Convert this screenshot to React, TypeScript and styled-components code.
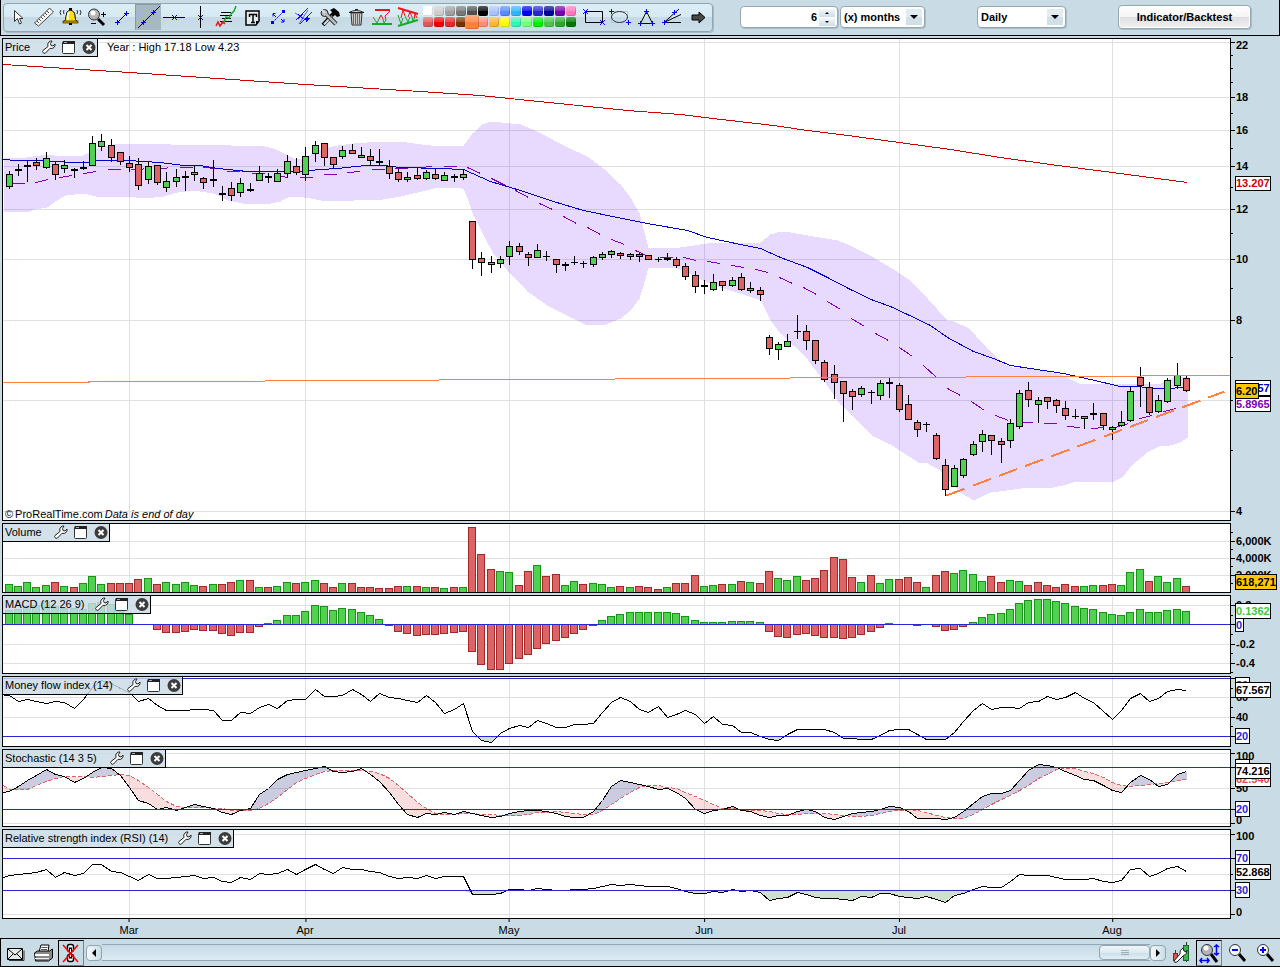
import React from "react";
import styled, { createGlobalStyle, css } from "styled-components";

/* ---------- palette ---------- */

const UI = "#c9dbe5";
const GRID = "#e0e0e0";
const LEVEL = "#2828d2";
const GREEN = "#50d250";
const GREEN_EDGE = "#149614";
const RED = "#dc6464";
const RED_EDGE = "#a02828";
const PURPLE = "#8000b8";
const ORANGE = "#ff8040";

/* ---------- series ---------- */

type Point = [number, number];

const STEP = 9.27;
const barX = (i: number) => Math.floor(9.15 + i * STEP);
const MONTHS: [string, number][] = [
  ["Mar", 13],
  ["Apr", 32],
  ["May", 54],
  ["Jun", 75],
  ["Jul", 96],
  ["Aug", 119],
];

// kind, high, body top, body bottom, low
const CANDLES = `
g 171 174 186 188|k 164 169 170 175|k 160 165 166 181|r 158 162 165 169|g 152 158 167 168|r 162 164 174 179|g 160 165 168 172|k 168 169 170 177
k 161 167 168 169|g 136 143 165 165|g 134 141 146 150|r 139 145 157 161|r 152 152 161 164|r 156 163 167 171|r 158 164 185 189|g 162 166 179 183
r 165 165 182 184|g 172 181 187 191|g 169 177 181 186|k 171 176 177 190|g 166 172 174 180|r 177 178 182 188|k 160 179 180 186|k 186 193 194 200
r 182 188 195 200|g 178 183 192 196|k 183 189 190 191|g 166 173 180 180|k 173 176 177 182|g 169 173 181 181|g 155 161 173 177|r 158 166 172 174
g 147 156 174 180|g 141 145 153 161|r 143 143 157 165|r 157 157 164 168|g 146 150 156 158|r 144 150 153 153|g 147 155 157 157|r 149 156 160 164
k 149 161 162 164|r 160 166 173 178|r 169 172 179 181|g 172 177 179 181|r 168 175 178 179|g 170 172 178 179|r 169 174 178 179|g 172 175 180 180
k 174 176 177 181|g 170 174 177 179|r 221 221 259 268|r 252 258 262 275|g 256 262 264 272|g 256 259 263 267|g 241 246 256 264|r 243 246 251 254
r 252 254 257 265|g 244 250 257 257|k 251 256 256 260|r 259 259 264 272|k 262 264 265 270|k 256 262 262 264|k 261 263 263 267|g 256 257 264 266
g 252 254 257 259|g 250 251 254 257|r 252 253 255 258|g 253 254 256 259|r 253 254 256 261|r 255 255 259 259|k 257 259 259 261|k 253 258 259 260
r 257 259 265 267|r 263 266 276 279|r 271 275 286 292|k 280 285 286 293|g 274 282 289 290|r 281 281 285 290|g 277 280 285 286|r 273 277 289 290
g 282 288 290 292|r 287 290 294 300|r 335 337 348 354|g 342 344 349 359|g 334 341 346 346|k 315 331 331 338|r 325 331 340 349|r 340 340 360 363
r 360 362 379 381|r 365 374 382 398|r 381 381 393 421|r 389 391 396 409|g 386 388 394 396|k 390 392 392 403|g 380 383 395 399|k 378 382 383 397
r 383 385 409 411|r 395 404 419 419|r 420 422 429 436|k 422 424 424 431|r 433 435 458 459|r 459 465 489 495|g 465 468 486 486|g 458 459 475 477
g 441 444 454 455|g 430 434 441 451|r 435 435 440 454|r 438 441 444 462|g 419 423 440 447|g 390 393 426 428|r 382 390 399 406|g 397 400 404 422
r 397 397 401 408|r 399 400 405 412|r 401 408 415 419|k 409 416 416 418|g 416 416 418 428|k 403 413 414 419|r 413 413 425 429|g 426 427 429 439
g 411 422 425 426|g 387 391 420 421|r 367 377 385 406|r 382 387 412 414|g 395 400 411 412|g 378 380 401 402|g 363 375 385 388|r 376 378 390 391`
  .trim()
  .split(/[|\n]/)
  .map((row) => {
    const [kind, ...v] = row.split(" ");
    return { kind, v: v.map(Number) };
  });

const VOLUME = `g584 g586 g582 g587 g585 r582 g586 r587 g583 g576 g584 r583 r583 r583 r579 g578 r584 g582 g584 g582 g585 r586 g584 r584 r582 g580 r580 g587 r587 g586
g582 r583 g582 g580 r583 r587 g583 r583 r587 r587 r588 r588 r586 g586 r586 g587 r587 g588 r587 g587 r527 r554 r569 g571 g572 r585 r571 g565 r576 r574
g585 g581 r584 g583 g584 g587 r586 g587 r586 r587 r589 g587 r583 r583 r575 g586 g585 r584 g584 r581 g582 r583 r571 g578 g580 g576 r580 r578 r570 r557
r559 r577 g582 r575 g583 g579 r579 r577 r582 g587 r575 r571 g573 g570 g574 g581 r576 r582 g580 g581 r585 r582 r585 r587 r584 r586 g586 g585 r585 r584
g585 g572 g569 r581 g576 g582 g578 r586`
  .split(/\s+/)
  .map((s) => ({ up: s[0] === "g", y: Number(s.slice(1)) }));

const nums = (s: string) => s.trim().split(/\s+/).map(Number);

const MACD = nums(`610 609 606 605 602 606 608 608 609 603 602 604 609 614 624 624 629 632 632 631 629 630 630 633 635 632 632 626 623 620 615 615 611 605 606 610 608 609 612 615
619 625 631 633 635 634 634 633 632 631 651 664 669 669 663 658 654 648 643 640 637 633 629 625 620 616 614 612 612 612 612 612 613 616 620 622 622 622 621 621
621 622 631 636 637 634 633 635 637 637 638 637 634 631 627 623 624 624 625 624 626 630 629 626 622 617 614 613 609 603 600 599 599 601 603 606 608 609 612 614
615 612 609 612 612 610 609 611`);

const MFI = nums(`695 701 699 701 703 701 702 708 699 687 680 683 688 692 701 698 705 710 710 710 709 709 710 720 720 712 713 707 704 708 700 699 699 689 696 696 695 689 694 701
693 697 698 700 702 695 702 713 709 703 731 740 742 733 728 725 727 720 723 727 727 724 724 723 712 702 697 701 709 712 706 717 714 710 714 723 716 724 725 732
732 736 739 740 734 729 729 729 729 732 738 738 739 739 735 730 729 729 734 739 739 739 732 721 710 703 709 707 707 708 702 701 696 699 697 692 698 702 711 719
710 698 693 701 698 691 689 690`);

const STOCH = nums(`791 786 780 775 769 774 776 782 778 772 767 768 775 787 800 803 809 807 810 807 804 806 808 812 814 810 808 794 788 779 774 772 770 768 766 771 772 771 768 774
781 792 804 814 817 813 814 812 814 811 813 815 817 816 813 811 810 810 811 813 816 817 817 811 800 786 780 782 784 786 789 788 792 798 809 813 810 809 806 810
811 815 817 815 815 811 809 811 817 819 816 813 812 811 809 806 807 811 818 818 818 819 817 811 803 796 793 793 790 780 770 764 765 767 771 775 779 780 785 790
792 782 775 779 786 784 774 771`);

const SIGNAL = nums(`789 789 789 785 781 778 776 776 776 777 776 775 774 775 780 787 794 801 806 807 807 807 808 808 810 810 810 808 803 797 789 782 778 774 771 770 770 770 770 771
773 778 785 793 802 808 813 814 814 813 813 814 814 815 815 815 814 812 812 811 812 813 814 814 810 804 798 792 787 785 785 787 788 792 796 800 804 808 808 809
810 810 811 813 814 814 813 813 813 814 815 816 816 815 813 811 810 809 810 812 815 817 818 818 814 809 804 799 795 790 785 778 774 769 768 768 771 773 777 782
785 786 785 784 783 782 780 779`);

const RSI = nums(`875 874 873 872 869 877 872 875 873 864 864 871 872 876 880 874 878 878 877 876 875 878 877 881 882 877 879 873 874 873 869 874 869 864 869 873 867 869 869 871
872 876 878 877 878 875 878 876 876 876 894 894 894 893 889 889 890 888 889 890 890 889 889 888 886 884 885 884 885 886 886 886 888 891 893 893 891 892 889 891
890 892 900 898 897 892 894 897 898 898 899 900 896 897 893 893 896 897 898 896 899 902 895 893 889 886 887 887 881 874 875 875 875 877 879 879 879 878 881 882
880 869 868 876 873 868 866 871`);

const pairs = (s: string): Point[] =>
  s
    .trim()
    .split(/\s+/)
    .map((p) => p.split(",").map(Number) as Point);

const BAND_TOP = pairs(`3,158 25,157 40,155 47,154 60,156 82,155 90,151 100,147 117,143 157,143 170,144 217,145 222,144 230,145 260,145 273,148 287,155 293,158 305,158 310,154
320,149 337,145 353,143 380,141 400,141 413,143 430,145 463,145 472,133 482,124 490,121 520,124 537,131 567,147 587,156 603,168 620,184 630,197 639,213 644,232 648,247
680,247 713,242 730,243 760,242 770,234 780,231 790,232 813,236 837,240 845,243 873,257 890,267 907,278 927,298 947,320 953,321 967,327 975,335 987,348 1003,363 1012,367
1030,368 1047,371 1060,374 1070,379 1078,383 1160,383 1168,379 1177,376 1187,376`);
const BAND_BOTTOM = pairs(`3,211 27,212 33,209 47,207 55,201 65,195 83,193 100,197 127,196 143,198 163,196 177,192 193,190 213,193 227,200 243,203 270,203 280,201 287,197 297,196
310,198 320,200 337,201 353,200 383,199 400,196 417,192 437,187 460,188 463,188 468,200 473,215 483,235 493,253 507,270 527,291 547,305 570,317 587,325 605,324 620,318
630,310 639,298 644,282 648,267 675,267 693,275 704,281 720,287 740,293 760,300 770,320 780,333 793,345 807,359 823,380 840,404 857,421 873,436 890,444 907,455 918,462
927,463 938,469 947,478 960,492 973,500 990,492 1007,490 1020,488 1052,487 1067,484 1075,481 1113,481 1122,477 1132,464 1147,452 1158,446 1170,445 1180,442 1187,437`);
const SLOW_AVERAGE = pairs(`3,64 129,72 305,84 420,91 480,95 509,98 627,110 680,114 704,117 773,125 807,130 840,134 899,142 950,149 1000,157 1050,164 1112,172 1187,182`);
const FAST_AVERAGE = pairs(`3,159 15,160 43,160 70,162 87,162 97,160 127,160 160,162 183,165 200,165 217,168 247,171 297,171 320,169 337,168 365,165 383,165 400,167 440,168 463,169
490,181 520,190 553,201 583,210 617,217 647,223 687,230 707,237 740,244 760,248 780,257 807,267 827,277 850,289 873,300 890,306 907,314 930,325 947,337 973,351 993,358
1010,365 1030,368 1063,373 1090,379 1120,386 1140,386 1147,388 1172,388 1177,387 1187,387`);
const MIDDLE = pairs(`3,183 24,183 35,182 48,179 59,177 72,175 83,173 96,171 107,169 131,169 155,168 179,167 203,167 216,168 228,171 240,171 251,173 264,173 275,175 288,177 312,177
323,174 336,174 347,172 360,171 371,169 384,169 395,168 420,167 431,166 456,166 467,167 480,173 491,178 501,183 515,190 528,197 539,203 552,209 563,216 576,223 587,227
600,234 611,239 624,244 635,250 648,256 659,257 683,257 696,260 707,261 720,263 731,265 744,267 755,269 768,272 779,277 792,283 803,287 816,294 827,301 840,309 851,318
864,326 875,333 888,340 899,347 912,356 923,365 936,377 947,388 960,395 971,401 984,410 995,415 1008,420 1019,422 1032,422 1043,423 1056,423 1067,426 1080,427
1091,428 1104,427 1115,427 1128,423 1139,418 1152,415 1163,411 1176,408`);

/* ---------- geometry helpers ---------- */

const join = (pts: Point[]) => pts.map(([x, y]) => `${x + 0.5},${y + 0.5}`).join(" ");
const perBar = (ys: number[], lead: number): Point[] => [[3, lead], ...ys.map((y, i): Point => [barX(i), y])];

function valueAt(pts: Point[], x: number) {
  const i = Math.max(1, pts.findIndex((p) => p[0] >= x));
  const [x0, y0] = pts[i - 1];
  const [x1, y1] = pts[i];
  return y0 + ((y1 - y0) * (x - x0)) / (x1 - x0);
}

// Splits a line into dashes whose length is measured along the time axis.
function dashes(pts: Point[], start: number, on: number, period: number): string {
  const end = pts[pts.length - 1][0];
  let d = "";
  for (let x = start; x < end; x += period) {
    const stop = Math.min(x + on, end);
    d += `M${x + 0.5} ${valueAt(pts, x) + 0.5}L${stop + 0.5} ${valueAt(pts, stop) + 0.5}`;
  }
  return d;
}

/* ---------- page ---------- */

const GlobalStyle = createGlobalStyle`
  * { box-sizing: border-box; }
  body {
    margin: 0;
    background: ${UI};
    color: #000;
    font-family: "Liberation Sans", Arial, sans-serif;
    font-size: 11px;
    line-height: 14px;
  }
  button, input, select { font: inherit; color: inherit; margin: 0; }
`;

const Page = styled.main`
  display: flex;
  flex-direction: column;
  min-width: 1180px;
`;

const Toolbar = styled.header`
  display: flex;
  align-items: flex-start;
  height: 36px;
  padding: 3px 28px 0 2px;
  border: solid #000;
  border-width: 0 1px 1px;
`;

const ToolGroup = styled.div`
  display: flex;
  width: 710px;
  height: 29px;
  padding-left: 1px;
  border: 1px solid #8fa6b2;
  border-radius: 4px;
  background: linear-gradient(#dceef8 0, #d6e9f3 50%, #c6dae5 50%, #cbdfea 100%);
  box-shadow: 1px 1px 0 #a9bcc6;
`;

const ToolButton = styled.button<{ $active?: boolean }>`
  width: 26px;
  height: 26px;
  padding: 0;
  border: 0;
  background: none;
  svg {
    display: block;
  }
  ${(p) =>
    p.$active &&
    css`
      background: #a5b8c3;
      box-shadow: inset 1px 1px 0 #8a9ba5;
    `}
`;

const Palette = styled.div`
  display: grid;
  grid-template-columns: repeat(14, 10px);
  grid-auto-rows: 10px;
  gap: 1px;
  width: 160px;
  padding: 2px 0 0 2px;
`;

const Swatch = styled.button<{ $color: string; $active?: boolean }>`
  width: ${(p) => (p.$active ? 14 : 10)}px;
  height: ${(p) => (p.$active ? 14 : 10)}px;
  margin: ${(p) => (p.$active ? -2 : 0)}px;
  padding: 0;
  border: 0;
  border-radius: 2px;
  z-index: ${(p) => (p.$active ? 1 : 0)};
  background: linear-gradient(rgba(255, 255, 255, 0.35), rgba(255, 255, 255, 0.15) 50%, rgba(255, 255, 255, 0) 50%),
    ${(p) => p.$color};
  box-shadow: inset -1px -1px 0 rgba(0, 0, 0, 0.15);
`;

const Field = styled.div<{ $width: number; $gap: number }>`
  position: relative;
  display: flex;
  align-items: center;
  width: ${(p) => p.$width}px;
  height: 22px;
  margin: 3px 0 0 ${(p) => p.$gap}px;
  border: 1px solid #93a8b3;
  border-radius: 4px;
  background: #fff;
  box-shadow: 1px 1px 0 #a9bcc6;
  font-weight: bold;
`;

const NumberInput = styled.input`
  flex: 1;
  min-width: 0;
  height: 20px;
  padding: 0;
  border: 0;
  background: none;
  outline: 0;
  text-align: right;
`;

const Spinner = styled.div`
  display: flex;
  flex-direction: column;
  gap: 1px;
  width: 16px;
  margin: 0 2px;
  button {
    display: grid;
    place-items: center;
    height: 8px;
    padding: 0;
    border: 0;
    background: linear-gradient(#f2f7fa, #cfdfe7);
  }
`;

const Select = styled.select`
  width: 100%;
  height: 20px;
  padding: 0 0 0 3px;
  border: 0;
  background: none;
  appearance: none;
  outline: 0;
`;

const DropMark = styled.svg`
  position: absolute;
  top: 2px;
  right: 2px;
  pointer-events: none;
`;

const IndicatorButton = styled.button`
  width: 133px;
  height: 24px;
  margin: 2px 0 0 52px;
  padding: 0;
  border: 1px solid #93a8b3;
  border-radius: 4px;
  background: linear-gradient(#fff, #f4f4f4 50%, #dedede 50%, #f2f2f2);
  box-shadow: 1px 1px 0 #a9bcc6, inset 0 0 0 1px #fff;
  font-weight: bold;
`;

const Panels = styled.section`
  display: flex;
  flex-direction: column;
  gap: 2px;
  padding: 2px 0 0 2px;
`;

const PanelRow = styled.section<{ $height: number }>`
  display: flex;
  height: ${(p) => p.$height}px;
`;

const Plot = styled.div`
  position: relative;
  flex: 1;
  min-width: 0;
  border: 1px solid #000;
  background: #fff;
`;

const Chart = styled.svg`
  display: block;
  width: 100%;
  height: 100%;
  shape-rendering: crispEdges;
`;

const Scale = styled.svg`
  display: block;
  width: 49px;
  height: 100%;
  overflow: visible;
  font-weight: bold;
  shape-rendering: crispEdges;
`;

const PanelHeader = styled.div`
  position: absolute;
  top: 0;
  left: 0;
  display: flex;
  align-items: flex-start;
  gap: 6px;
  height: 18px;
  padding: 1px 1px 0 2px;
  border: solid #000;
  border-width: 0 1px 1px 0;
  background: rgba(201, 219, 229, 0.82);
`;

const PanelTitle = styled.h2<{ $width: number }>`
  width: ${(p) => p.$width}px;
  margin: 0 -6px 0 0;
  font-size: 11px;
  font-weight: normal;
  white-space: nowrap;
`;

const HeaderButton = styled.button`
  width: 14px;
  height: 14px;
  padding: 0;
  border: 0;
  background: none;
  svg {
    display: block;
  }
`;

const PlotNote = styled.p<{ $bottom?: boolean }>`
  position: absolute;
  display: flex;
  gap: 2px;
  left: ${(p) => (p.$bottom ? 2 : 104)}px;
  ${(p) => (p.$bottom ? "bottom: -1px" : "top: 1px")};
  margin: 0;
`;

const TimeScale = styled.div`
  position: relative;
  height: 19px;
  margin: -2px 49px 0 0;
`;

const Month = styled.span`
  position: absolute;
  top: 0;
  padding-top: 4px;
  transform: translateX(-50%);
  &::before {
    content: "";
    position: absolute;
    top: 0;
    left: 50%;
    width: 1px;
    height: 3px;
    background: #000;
  }
`;

const BottomBar = styled.footer`
  display: flex;
  align-items: center;
  height: 29px;
  border: solid #000;
  border-width: 1px 0 1px 1px;
  padding-left: 1px;
`;

const ChartTools = styled.div`
  display: flex;
  flex: none;
  margin-left: 2px;
`;

const BarButton = styled.button<{ $active?: boolean }>`
  width: 26px;
  height: 26px;
  margin-right: 2px;
  padding: 0;
  border: 1px solid transparent;
  background: none;
  flex: none;
  svg {
    display: block;
  }
  ${(p) =>
    p.$active &&
    css`
      border-color: #000 #808080 #808080 #000;
    `}
`;

const ScrollArrow = styled.button`
  display: grid;
  place-items: center;
  flex: none;
  width: 16px;
  height: 16px;
  padding: 0;
  border: 1px solid #8fa6b2;
  border-radius: 4px;
  background: linear-gradient(90deg, #f4f9fb, #cbdde7);
`;

const ScrollTrack = styled.div`
  display: flex;
  justify-content: flex-end;
  flex: 1;
  height: 17px;
  border: solid #93a8b3;
  border-width: 1px 0;
  background: linear-gradient(#c6dae5, #dcebf4);
`;

const ScrollThumb = styled.div`
  display: grid;
  place-items: center;
  width: 51px;
  height: 15px;
  border: 1px solid #8fa6b2;
  border-radius: 4px;
  background: linear-gradient(#f0f6fa, #dbe9f1 50%, #cbdde7 50%, #e2eef5);
`;

/* ---------- toolbar drawings ---------- */

const BLUE = "#0000ff";

const Plus = ({ x, y }: { x: number; y: number }) => (
  <path d={`M${x - 2} ${y + 0.5}h5M${x + 0.5} ${y - 2}v5`} stroke={BLUE} fill="none" shapeRendering="crispEdges" />
);
const Cross = ({ x, y }: { x: number; y: number }) => (
  <path d={`M${x - 2} ${y - 2}l5 5M${x + 3} ${y - 2}l-5 5`} stroke={BLUE} fill="none" />
);

const TOOLS: { name: string; art: React.ReactNode; active?: boolean }[] = [
  {
    name: "Pointer",
    art: <path d="M9.5 6.500v11l3-3 2 5.500 2-1-2-4.500h3.500z" fill="#fff" stroke="#333" />,
  },
  {
    name: "Ruler",
    art: (
      <>
        <path d="M3.500 19l15-15 4 4-15 14z" fill="#f4f4f4" stroke="#444" />
        <path d="M6 17l2 2M8 15l2 2M10 13l2 2M12 11l2 2M14 9l2 2M16 7l2 2" stroke="#555" />
      </>
    ),
  },
  {
    name: "Alert",
    art: (
      <>
        <path d="M7 18q2-2 2-6 0-5 4-6 5 1 5 6 0 4 2 6z" fill="#ffe000" stroke="#000" />
        <path d="M12 8q-2 3-1 8" stroke="#fff" fill="none" strokeWidth="2" />
        <rect x="12" y="4" width="3" height="2" />
        <rect x="6" y="17" width="15" height="2" fill="#e0a800" stroke="#000" strokeWidth=".6" />
        <rect x="12" y="19" width="3" height="2" />
        <path d="M4 6q-2 2 0 5M7 6q-1 2 0 4M23 6q2 2 0 5M20 6q1 2 0 4" stroke="#000" fill="none" strokeWidth=".8" />
      </>
    ),
  },
  {
    name: "Zoom",
    art: (
      <>
        <path d="M15 15l6 6" stroke="#000" strokeWidth="3" />
        <circle cx="11" cy="10.500" r="5.500" fill="#b4b4b4" stroke="#333" />
        <circle cx="10" cy="9" r="2.500" fill="#fff" />
        <path d="M18 10.500h5M20.500 8v5M8 19.500h5" stroke="#000" shapeRendering="crispEdges" />
      </>
    ),
  },
  {
    name: "Segment",
    art: (
      <>
        <path d="M9 18l9-9" stroke="#000" />
        <Plus x={8} y={18} />
        <Plus x={17} y={9} />
      </>
    ),
  },
  {
    name: "Line",
    active: true,
    art: (
      <>
        <path d="M3 24L25 2" stroke="#000" />
        <Plus x={8} y={18} />
        <Plus x={18} y={8} />
      </>
    ),
  },
  {
    name: "Horizontal line",
    art: (
      <>
        <path d="M2 13.500h22" stroke="#000" shapeRendering="crispEdges" />
        <Cross x={13} y={13} />
      </>
    ),
  },
  {
    name: "Vertical line",
    art: (
      <>
        <path d="M13.500 2v22" stroke="#000" shapeRendering="crispEdges" />
        <Cross x={13} y={13} />
      </>
    ),
  },
  {
    name: "Trade list",
    art: (
      <>
        <path d="M8 8.500h10M7 11.500h12M9 14.500h9M7 17.500h12" stroke="#000" shapeRendering="crispEdges" />
        <path d="M8 19l3-1 2-5 3 1 2-4 3-3 2-5" stroke="#14aa28" fill="none" strokeWidth="1.500" />
        <path d="M3 22l2-4 2 4 3-4 2 2" stroke="#f01414" fill="none" strokeWidth="1.500" />
      </>
    ),
  },
  {
    name: "Text",
    art: (
      <>
        <path d="M7 7h13v10l-3 4H7z" fill="#e4edf2" stroke="#000" strokeWidth="1.500" />
        <path d="M10 10.500h8M10.500 10v3M17.500 10v3M14 10v8M12 18.500h4" stroke="#000" strokeWidth="1.500" fill="none" />
        <path d="M20 17h-3v4z" />
      </>
    ),
  },
  {
    name: "Fibonacci",
    art: (
      <>
        <path d="M8 18L18 8" stroke={BLUE} strokeDasharray="2 1" />
        <rect x="6" y="17" width="3" height="3" fill={BLUE} />
        <rect x="17" y="6" width="3" height="3" fill={BLUE} />
        <path d="M8 10l3 3M10.500 9.500H8v3M19 18l-3-3M19 15v3h-3" stroke={BLUE} fill="none" />
      </>
    ),
  },
  {
    name: "Parallel lines",
    art: (
      <>
        <path d="M5 16L17 4M9 20L21 8" stroke="#333" fill="none" />
        <path d="M4 9l13 8M17 6l-9 14" stroke={BLUE} strokeWidth=".6" />
        <Plus x={16} y={14} />
        <Plus x={15} y={15} />
        <Cross x={9} y={12} />
      </>
    ),
  },
  {
    name: "Tools",
    art: (
      <>
        <path d="M6 21L17 9" stroke="#000" strokeWidth="4" />
        <path d="M13 6l4-2 5 4 1 4-3 1-4-4z" fill="#000" />
        <path d="M7 20.500L15 12" stroke="#ddd" strokeWidth="2" />
        <path d="M8 9l11 11" stroke="#222" strokeWidth="4.500" />
        <circle cx="7.500" cy="9" r="3.500" fill="#bbb" stroke="#222" />
        <path d="M8 9l11 11" stroke="#bbb" strokeWidth="2.500" />
        <path d="M4 5l4 4" stroke="#cfe0ea" strokeWidth="2" />
      </>
    ),
  },
  {
    name: "Delete",
    art: (
      <>
        <path d="M8 9h11l-1 12H9z" fill="#ccc" stroke="#333" />
        <path d="M10.500 10v10M12.500 10v10M14.500 10v10M16.500 10v10" stroke="#666" />
        <path d="M6 8.500q7-4 15 0z" fill="#eee" stroke="#222" />
        <path d="M12 5.500h3" stroke="#222" />
      </>
    ),
  },
  {
    name: "Support and resistance",
    art: (
      <>
        <path d="M6 6h15" stroke="#f01414" strokeWidth="2" />
        <path d="M3 20h20" stroke="#14aa28" strokeWidth="2" />
        <path d="M4 13l4 6 2-4M14 15l1 4 2-3" stroke="#14aa28" fill="none" />
        <path d="M10 15l2-4 2 4M17 16l-1-4 5-5" stroke="#f01414" fill="none" />
      </>
    ),
  },
  {
    name: "Triangle detection",
    art: (
      <>
        <path d="M3 4l20 6" stroke="#f01414" strokeWidth="2" />
        <path d="M3 22l20-6" stroke="#14aa28" strokeWidth="2" />
        <path d="M3 11l3 9 2-6M10 12l3 6 2-5M17 13l1 4 2-4" stroke="#14aa28" fill="none" />
        <path d="M6 14l2-8 2 6M13 13l2-5 2 5M19 14l1-4 2 4" stroke="#f01414" fill="none" />
      </>
    ),
  },
];

const SHAPES: { name: string; art: React.ReactNode }[] = [
  {
    name: "Rectangle",
    art: (
      <>
        <path d="M4.500 7.500h17v11h-17z" fill="none" stroke="#000" />
        <Cross x={4} y={7} />
        <Cross x={21} y={18} />
      </>
    ),
  },
  {
    name: "Ellipse",
    art: (
      <>
        <path d="M4.500 7.500h16v11h-16z" fill="none" stroke="#bcc8ce" />
        <ellipse cx="12.500" cy="13" rx="8" ry="5.500" fill="none" stroke="#333" />
        <Plus x={4} y={7} />
        <Plus x={21} y={18} />
      </>
    ),
  },
  {
    name: "Triangle",
    art: (
      <>
        <path d="M13.500 7.500l-6 12h12z" fill="none" stroke="#000" />
        <Plus x={13} y={7} />
        <Plus x={7} y={19} />
        <Plus x={19} y={19} />
      </>
    ),
  },
  {
    name: "Fan",
    art: (
      <>
        <path d="M5 18.500h17M5 18.500l17-8M5 18.500L20 5" stroke="#000" />
        <Plus x={5} y={18} />
        <Plus x={15} y={8} />
      </>
    ),
  },
  {
    name: "Arrow",
    art: <path d="M7 11h7V8l6 5.500-6 5.500V16H7z" fill="#484848" stroke="#000" />,
  },
];

const SWATCHES = [
  "#ffffff", "#cdcdcd", "#a0a0a0", "#787878", "#505050", "#000000", "#aac0ff",
  "#5a8cff", "#32b4ff", "#0000f0", "#2828d2", "#000096", "#7800b0", "#ff78be",
  "#dc5a5a", "#f00000", "#e62828", "#783200", "#ff8040", "#ff8c78", "#ffb432",
  "#fafa00", "#32f5b4", "#78ff78", "#00f000", "#46c846", "#28aa28", "#007800",
];

const Caret = () => (
  <DropMark width="16" height="16" viewBox="0 0 16 16" aria-hidden="true">
    <rect width="16" height="16" fill="#e2edf3" />
    <rect y="8" width="16" height="8" fill="#d0e0e9" />
    <path d="M4 6h8l-4 4z" />
  </DropMark>
);

function TopToolbar() {
  return (
    <Toolbar>
      <ToolGroup>
        {TOOLS.map((t) => (
          <ToolButton key={t.name} type="button" aria-label={t.name} aria-pressed={!!t.active} $active={t.active}>
            <svg width="26" height="26" viewBox="0 0 26 26">{t.art}</svg>
          </ToolButton>
        ))}
        <Palette>
          {SWATCHES.map((c) => (
            <Swatch key={c} type="button" aria-label={`Colour ${c}`} $color={c} $active={c === ORANGE} />
          ))}
        </Palette>
        {SHAPES.map((t) => (
          <ToolButton key={t.name} type="button" aria-label={t.name}>
            <svg width="26" height="26" viewBox="0 0 26 26">{t.art}</svg>
          </ToolButton>
        ))}
      </ToolGroup>
      <Field $width={98} $gap={27}>
        <NumberInput type="text" inputMode="numeric" aria-label="Number of periods" defaultValue="6" />
        <Spinner>
          <button type="button" aria-label="Increase">
            <svg width="4" height="2" viewBox="0 0 4 2"><path d="M0 2l2-2 2 2z" /></svg>
          </button>
          <button type="button" aria-label="Decrease">
            <svg width="4" height="2" viewBox="0 0 4 2"><path d="M0 0h4L2 2z" /></svg>
          </button>
        </Spinner>
      </Field>
      <Field $width={85} $gap={2}>
        <Select aria-label="Period unit" defaultValue="months">
          <option value="months">(x) months</option>
        </Select>
        <Caret />
      </Field>
      <Field $width={89} $gap={52}>
        <Select aria-label="Timeframe" defaultValue="daily">
          <option value="daily">Daily</option>
        </Select>
        <Caret />
      </Field>
      <IndicatorButton type="button">Indicator/Backtest</IndicatorButton>
    </Toolbar>
  );
}

/* ---------- panels ---------- */

interface Tick {
  y: number;
  label: string;
  at?: number;
}
interface Tag {
  y: number;
  height?: number;
  width: number;
  label: string;
  color: string;
  fill?: string;
}

interface PanelProps {
  title: string;
  titleWidth: number;
  top: number;
  height: number;
  grid: number[];
  levels?: number[];
  ticks: Tick[];
  minor?: number[];
  tags: Tag[];
  notes?: React.ReactNode;
  children: React.ReactNode;
}

function Panel({ title, titleWidth, top, height, grid, levels = [], ticks, minor = [], tags, notes, children }: PanelProps) {
  return (
    <PanelRow $height={height} aria-label={title}>
      <Plot>
        <Chart viewBox={`3 ${top + 1} 1227 ${height - 2}`} preserveAspectRatio="none">
          {grid.map((y) => (
            <rect key={y} x="3" y={y} width="1227" height="1" fill={GRID} />
          ))}
          {MONTHS.map(([m, i]) => (
            <rect key={m} x={barX(i)} y={top} width="1" height={height} fill={GRID} />
          ))}
          {children}
          {levels.map((y) => (
            <rect key={y} x="3" y={y} width="1227" height="1" fill={LEVEL} />
          ))}
        </Chart>
        <PanelHeader>
          <PanelTitle $width={titleWidth}>{title}</PanelTitle>
          <HeaderButton type="button" aria-label={`${title} settings`}>
            <svg width="14" height="14" viewBox="0 0 14 14">
              <path
                d="M1 12.500q-1-1 0-2l5-4q-1-3 1-4.500 1-1.300 3-1L8.500 3.500l.5 2 2 .5L13 4q.5 2-1 3.500-1.500 1.500-4 .8L3.500 13q-1.500 1-2.500-.5z"
                fill="#fff"
                stroke="#222"
              />
            </svg>
          </HeaderButton>
          <HeaderButton type="button" aria-label={`${title} window`}>
            <svg width="14" height="14" viewBox="0 0 14 14">
              <rect x=".5" y="1.500" width="12" height="12" rx="1" fill="#fff" stroke="#333" />
              <rect x="1" y="1" width="12" height="3" fill="#222" />
              <rect x="2" y="2" width="3" height="1" fill="#aaa" />
            </svg>
          </HeaderButton>
          <HeaderButton type="button" aria-label={`Close ${title}`}>
            <svg width="14" height="14" viewBox="0 0 14 14">
              <circle cx="7" cy="7.500" r="6.500" fill="#3c3c3c" />
              <path d="M4.500 5l5 5M9.500 5l-5 5" stroke="#fff" strokeWidth="2" />
            </svg>
          </HeaderButton>
        </PanelHeader>
        {notes}
      </Plot>
      <Scale viewBox={`1231 ${top} 49 ${height}`} preserveAspectRatio="xMinYMin">
        {minor.map((y) => (
          <rect key={y} x="1231" y={y} width="2" height="1" />
        ))}
        {ticks.map((t) => (
          <g key={t.label}>
            <rect x="1231" y={t.y} width="4" height="1" />
            <text x="1236" y={(t.at ?? t.y) + 4}>{t.label}</text>
          </g>
        ))}
        {levels.map((y) => (
          <rect key={y} x="1231" y={y} width="4" height="1" />
        ))}
        {tags.map((t) => (
          <g key={t.label + t.y}>
            <rect x="1235.500" y={t.y + 0.5} width={t.width} height={t.height ?? 14} fill={t.fill ?? "#fff"} stroke="#000" />
            <text x="1236" y={t.y + (t.height === 15 ? 12 : 11)} fill={t.color}>{t.label}</text>
          </g>
        ))}
      </Scale>
    </PanelRow>
  );
}

const Candles = () => (
  <>
    {CANDLES.map(({ kind, v: [high, top, bottom, low] }, i) => {
      const x = barX(i);
      return (
        <g key={i}>
          <rect x={x} y={high} width="1" height={low - high + 1} />
          <rect x={x - 3} y={top} width="7" height={bottom - top + 1} />
          {kind !== "k" && (
            <rect x={x - 2} y={top + 1} width="5" height={bottom - top - 1} fill={kind === "g" ? GREEN : RED} />
          )}
        </g>
      );
    })}
  </>
);

// A histogram bar; the edge is drawn on every side but the one on the base line.
const Bar = ({ i, from, to, up, hanging }: { i: number; from: number; to: number; up: boolean; hanging?: boolean }) => (
  <>
    <rect x={barX(i) - 4} y={from} width="8" height={to - from} fill={up ? GREEN_EDGE : RED_EDGE} />
    {to - from > 1 && (
      <rect
        x={barX(i) - 3}
        y={hanging ? from : from + 1}
        width="6"
        height={to - from - 1}
        fill={up ? GREEN : RED}
      />
    )}
  </>
);

function Line({ ys, lead, below }: { ys: number[]; lead: number; below: number }) {
  const pts = perBar(ys, lead);
  return (
    <>
      <polygon
        points={`3,${below} ${pts.map(([x, y]) => `${x},${Math.max(y, below)}`).join(" ")} 1187,${below}`}
        fill="#d0e0cf"
      />
      <polyline points={join(pts)} fill="none" stroke="#000" />
    </>
  );
}

function StochasticLines() {
  const k = perBar(STOCH, 792);
  const d = perBar(SIGNAL, 785);
  return (
    <>
      {k.slice(1).map((p, i) => {
        const quad: Point[] = [k[i], p, d[i + 1], d[i]];
        const rising = k[i][1] + p[1] < d[i][1] + d[i + 1][1];
        return <polygon key={i} points={join(quad)} fill={rising ? "rgba(0,0,100,0.2)" : "rgba(220,80,80,0.19)"} />;
      })}
      <polyline points={join(d)} fill="none" stroke={RED} strokeDasharray="4 2" />
      <polyline points={join(k)} fill="none" stroke="#000" />
    </>
  );
}

const PRICE_GRID = [42, 97, 130, 166, 209, 259, 320, 400, 511];
const PRICE_LABELS = [22, 18, 16, 14, 12, 10, 8, 4];
const PRICE_ROWS = [42, 97, 130, 166, 209, 259, 320, 511];

export default function App() {
  return (
    <>
      <GlobalStyle />
      <Page>
        <TopToolbar />
        <Panels>
          <Panel
            title="Price"
            titleWidth={37}
            top={38}
            height={483}
            grid={PRICE_GRID}
            ticks={PRICE_LABELS.map((p, i) => ({ y: PRICE_ROWS[i], label: String(p), at: p === 22 ? 45 : undefined }))}
            minor={[55, 68, 82, 113, 148, 187, 233, 288, 357, 400, 450]}
            tags={[
              { y: 176, width: 35, label: "13.207", color: "#c80000" },
              { y: 380, width: 35, height: 15, label: "6.2957", color: "#0000c8" },
              { y: 396, width: 35, height: 15, label: "5.8965", color: PURPLE },
              { y: 383, width: 23, height: 15, label: "6.20", color: "#000", fill: "#ffc800" },
            ]}
            notes={
              <>
                <PlotNote>Year : High 17.18 Low 4.23</PlotNote>
                <PlotNote $bottom>
                  <span>©</span>
                  <span>ProRealTime.com</span>
                  <em>Data is end of day</em>
                </PlotNote>
              </>
            }
          >
            <polygon points={join([...BAND_TOP, ...[...BAND_BOTTOM].reverse()])} fill="rgba(102,8,255,0.15)" />
            <polyline points={join(SLOW_AVERAGE)} fill="none" stroke="#c80000" />
            <path d={dashes(MIDDLE, 11, 13, 24)} stroke={PURPLE} />
            <polyline points={join(FAST_AVERAGE)} fill="none" stroke="#0000c8" />
            <Candles />
            <path d="M3 382.500L1230 375.500" stroke={ORANGE} />
            <path d={dashes([[946, 495], [1224, 391]], 946, 18, 26.2)} stroke={ORANGE} strokeWidth="2" />
          </Panel>

          <Panel
            title="Volume"
            titleWidth={49}
            top={523}
            height={70}
            grid={[541, 558, 575]}
            ticks={[
              { y: 541, label: "6,000K" },
              { y: 558, label: "4,000K" },
              { y: 575, label: "2,000K" },
            ]}
            minor={[532, 549, 566, 583]}
            tags={[{ y: 574, width: 41, height: 15, label: "618,271", color: "#000", fill: "#ffc800" }]}
          >
            {VOLUME.map((v, i) => (
              <Bar key={i} i={i} from={v.y} to={593} up={v.up} />
            ))}
          </Panel>

          <Panel
            title="MACD (12 26 9)"
            titleWidth={90}
            top={595}
            height={79}
            grid={[605, 644, 663]}
            levels={[624]}
            ticks={[
              { y: 605, label: "0.2" },
              { y: 644, label: "-0.2" },
              { y: 663, label: "-0.4" },
            ]}
            minor={[615, 634, 653, 672]}
            tags={[
              { y: 618, width: 8, height: 13, label: "0", color: LEVEL },
              { y: 603, width: 35, height: 15, label: "0.1362", color: "#3cc83c" },
            ]}
          >
            {MACD.map((y, i) =>
              y === 624 ? null : (
                <Bar key={i} i={i} from={Math.min(y, 624)} to={y > 624 ? y + 1 : 624} up={y < 624} hanging={y > 624} />
              )
            )}
          </Panel>

          <Panel
            title="Money flow index (14)"
            titleWidth={122}
            top={676}
            height={71}
            grid={[697, 717]}
            levels={[678, 736]}
            ticks={[
              { y: 697, label: "60" },
              { y: 717, label: "40" },
            ]}
            minor={[688, 707, 726]}
            tags={[
              { y: 677, width: 14, height: 15, label: "80", color: LEVEL },
              { y: 682, width: 35, height: 15, label: "67.567", color: "#000" },
              { y: 728, width: 14, height: 15, label: "20", color: LEVEL },
            ]}
          >
            <Line ys={MFI} lead={695} below={736} />
          </Panel>

          <Panel
            title="Stochastic (14 3 5)"
            titleWidth={105}
            top={749}
            height={78}
            grid={[753, 788, 823]}
            levels={[767, 809]}
            ticks={[
              { y: 753, label: "100", at: 756 },
              { y: 788, label: "50" },
              { y: 823, label: "0", at: 820 },
            ]}
            tags={[
              { y: 759, width: 14, height: 15, label: "80", color: LEVEL },
              { y: 771, width: 35, height: 15, label: "62.540", color: "#dc5050" },
              { y: 763, width: 35, height: 15, label: "74.216", color: "#000" },
              { y: 801, width: 14, height: 15, label: "20", color: LEVEL },
            ]}
          >
            <StochasticLines />
          </Panel>

          <Panel
            title="Relative strength index (RSI) (14)"
            titleWidth={173}
            top={829}
            height={90}
            grid={[834, 874, 914]}
            levels={[858, 890]}
            ticks={[
              { y: 834, label: "100", at: 836 },
              { y: 914, label: "0", at: 912 },
            ]}
            minor={[874]}
            tags={[
              { y: 850, width: 14, height: 15, label: "70", color: LEVEL },
              { y: 864, width: 35, height: 15, label: "52.868", color: "#000" },
              { y: 882, width: 14, height: 15, label: "30", color: LEVEL },
            ]}
          >
            <Line ys={RSI} lead={877} below={890} />
          </Panel>

          <TimeScale>
            {MONTHS.map(([m, i]) => (
              <Month key={m} style={{ left: `${((barX(i) - 2) / 1229) * 100}%` }}>
                {m}
              </Month>
            ))}
          </TimeScale>
        </Panels>

        <BottomBar>
          <BarButton type="button" aria-label="Mail">
            <svg width="24" height="24" viewBox="0 0 24 24">
              <path d="M4.500 7.500h15v11h-15z" fill="#e4e8ea" stroke="#000" />
              <path d="M5 8l7 6 7-6M5 18l5-5M19 18l-5-5" fill="none" stroke="#000" />
              <path d="M6 19.500h15v-10" fill="none" stroke="#333" />
            </svg>
          </BarButton>
          <BarButton type="button" aria-label="Print">
            <svg width="24" height="24" viewBox="0 0 24 24">
              <path d="M8 11l2-7h8l-1 7z" fill="#fff" stroke="#000" />
              <path d="M10.500 6.500h6M10 8.500h6" stroke="#555" />
              <path d="M3.500 12l3-2h12l3-2v9l-4 3h-13z" fill="#888" stroke="#000" />
              <path d="M4 13h14v2H4z" fill="#fff" />
              <path d="M4 17.500h14" stroke="#eee" />
            </svg>
          </BarButton>
          <BarButton type="button" aria-label="Unlink charts" $active>
            <svg width="24" height="24" viewBox="0 0 24 24">
              <rect x="8.500" y="3.500" width="6" height="7" rx="2" fill="#fff" stroke="#000" strokeWidth="1.500" />
              <rect x="8.500" y="13.500" width="6" height="7" rx="2" fill="#fff" stroke="#000" strokeWidth="1.500" />
              <rect x="10.500" y="7" width="2" height="10" fill="#fff" stroke="#000" />
              <path d="M4 4l15 17M19 4L4 21" stroke="#f00" strokeWidth="1.500" />
            </svg>
          </BarButton>
          <ScrollArrow type="button" aria-label="Scroll left">
            <svg width="4" height="8" viewBox="0 0 4 8"><path d="M4 0v8L0 4z" /></svg>
          </ScrollArrow>
          <ScrollTrack role="scrollbar" aria-label="Time range" aria-controls="root" aria-valuenow={100}>
            <ScrollThumb>
              <svg width="8" height="5" viewBox="0 0 8 5" shapeRendering="crispEdges">
                <path d="M0 .5h8M0 2.500h8M0 4.500h8" stroke="#9ab0bb" />
              </svg>
            </ScrollThumb>
          </ScrollTrack>
          <ScrollArrow type="button" aria-label="Scroll right">
            <svg width="4" height="8" viewBox="0 0 4 8"><path d="M0 0v8l4-4z" /></svg>
          </ScrollArrow>
          <ChartTools>
            <BarButton type="button" aria-label="Chart settings">
              <svg width="24" height="24" viewBox="0 0 24 24">
                <path d="M17.500 1v20M6.500 9v13" stroke="#333" />
                <rect x="14.500" y="4.500" width="5" height="15" fill="#3cb450" stroke="#186428" />
                <rect x="4.500" y="12.500" width="4" height="7" fill="#e65050" stroke="#8c1e1e" />
                <path d="M5 20l6-7q-1-4 3-6l1 3 2 1 1-2q1 4-4 6l-6 6q-3 1-3-1z" fill="#fff" stroke="#222" />
              </svg>
            </BarButton>
            <BarButton type="button" aria-label="Fit chart" $active>
              <svg width="24" height="24" viewBox="0 0 24 24">
                <path d="M14 13l6 8" stroke="#000" strokeWidth="3" />
                <circle cx="10" cy="9" r="5.500" fill="#b4b4b4" stroke="#333" />
                <circle cx="9" cy="7" r="2.500" fill="#fff" />
                <path
                  d="M3 19.500h9M5 17l-2 2.500L5 22M10 17l2 2.500-2 2.500M19.500 4v10M17 6l2.500-2L22 6M17 12l2.500 2 2.500-2"
                  stroke={BLUE}
                  strokeWidth="1.500"
                  fill="none"
                />
              </svg>
            </BarButton>
            <BarButton type="button" aria-label="Zoom out">
              <svg width="24" height="24" viewBox="0 0 24 24">
                <path d="M14 13l6 7" stroke="#000" strokeWidth="3" />
                <circle cx="10" cy="9" r="5.500" fill="#f4f8fa" stroke="#333" />
                <path d="M7 9h6" stroke={BLUE} strokeWidth="2" />
              </svg>
            </BarButton>
            <BarButton type="button" aria-label="Zoom in">
              <svg width="24" height="24" viewBox="0 0 24 24">
                <path d="M14 13l6 7" stroke="#000" strokeWidth="3" />
                <circle cx="10" cy="9" r="5.500" fill="#f4f8fa" stroke="#333" />
                <path d="M7 9h6M10 6v6" stroke={BLUE} strokeWidth="2" />
              </svg>
            </BarButton>
          </ChartTools>
        </BottomBar>
      </Page>
    </>
  );
}
